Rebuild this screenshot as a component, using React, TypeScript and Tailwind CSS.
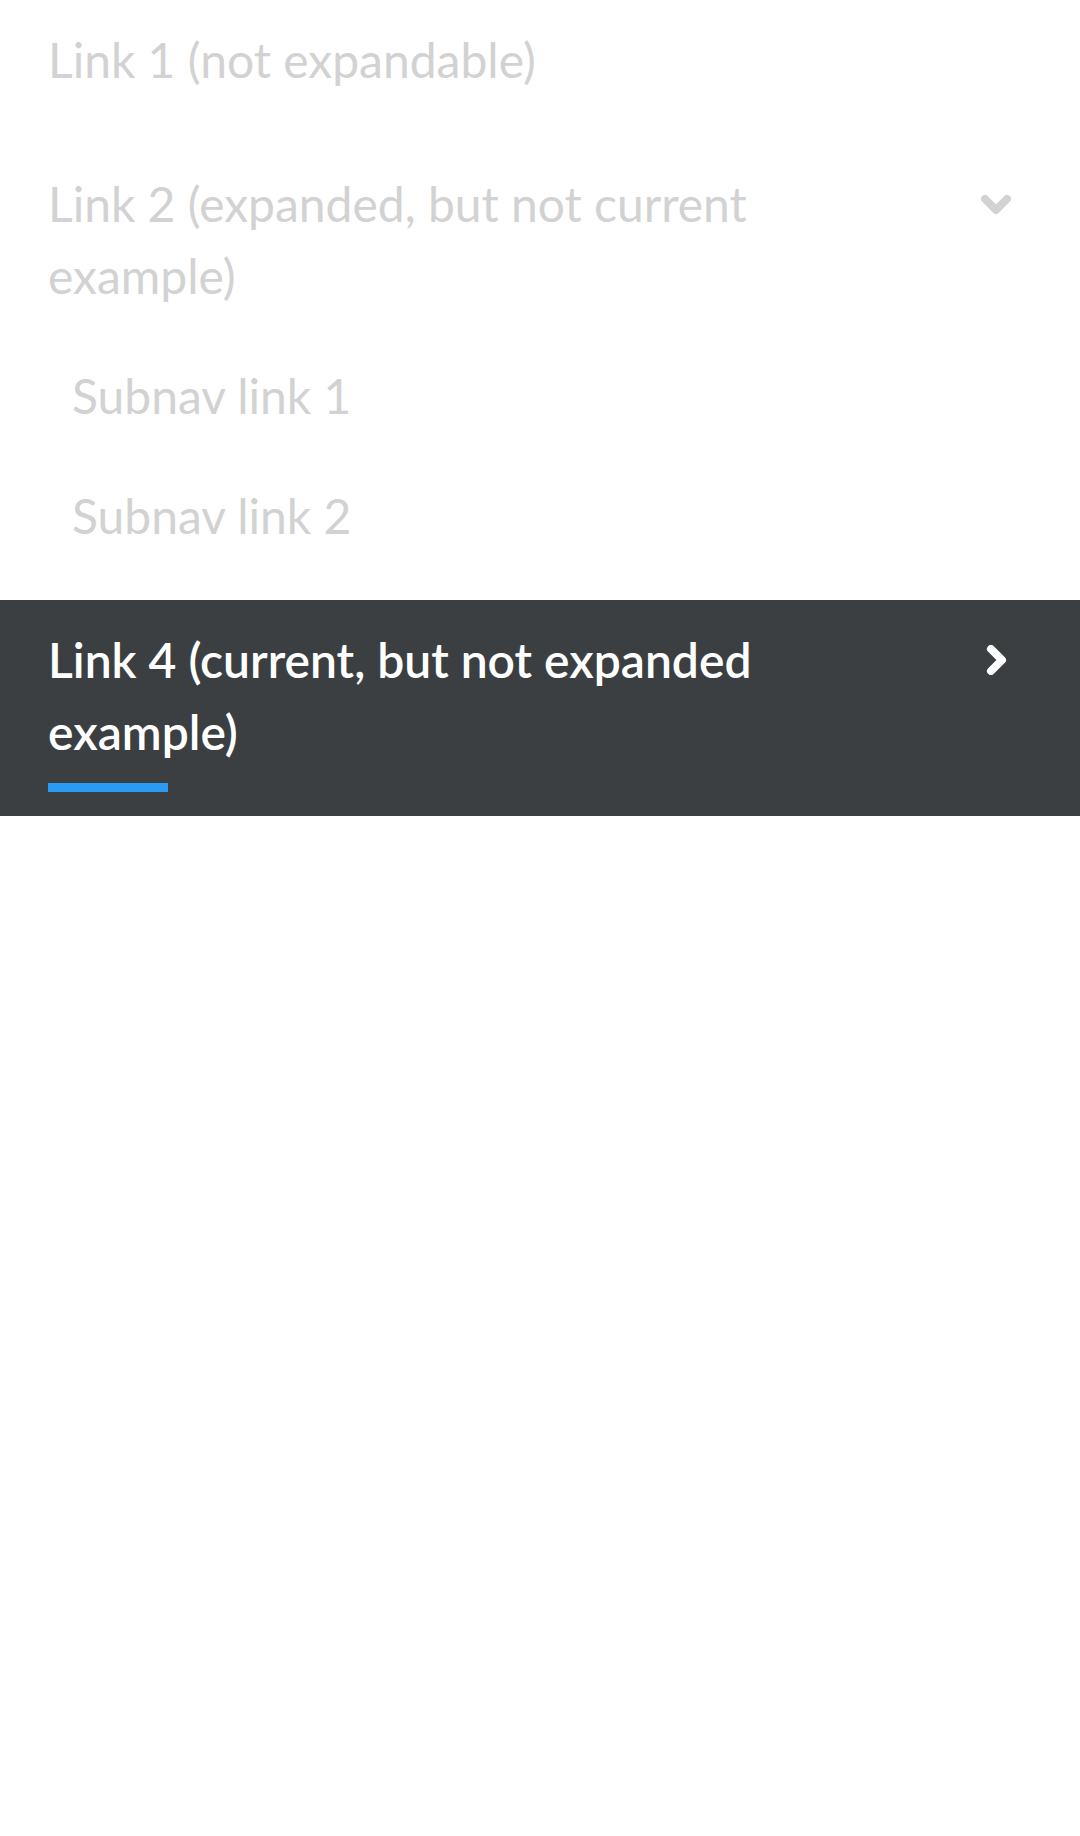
import React from "react";

interface NavItem {
  id: string;
  label: string;
  toggle?: "down" | "right";
  current?: boolean;
  children?: string[];
}

const items: NavItem[] = [
  { id: "1", label: "Link 1 (not expandable)" },
  {
    id: "2",
    label: "Link 2 (expanded, but not current example)",
    toggle: "down",
    children: ["Subnav link 1", "Subnav link 2"],
  },
  {
    id: "4",
    label: "Link 4 (current, but not expanded example)",
    toggle: "right",
    current: true,
  },
];

function Chevron({ dir, color }: { dir: "down" | "right"; color: string }) {
  return (
    <svg width="30" height="30" viewBox="0 0 30 30" fill="none" className="block">
      {dir === "down" ? (
        <path
          d="M4 10 L15 21 L26 10"
          stroke={color}
          strokeWidth="8"
          strokeLinecap="round"
          strokeLinejoin="round"
        />
      ) : (
        <path
          d="M10 4 L21 15 L10 26"
          stroke={color}
          strokeWidth="8"
          strokeLinecap="round"
          strokeLinejoin="round"
        />
      )}
    </svg>
  );
}

export default function App() {
  return (
    <div
      className="w-[1080px] min-h-[1836px] bg-white"
      style={{ fontFamily: "Lato, 'Open Sans', sans-serif" }}
    >
      <nav className="flex flex-col">
        {items.map((item, i) => (
          <div key={item.id} className={i > 0 ? "mt-6" : ""}>
            <div
              className={`flex items-start py-6 pl-12 pr-[69px] ${item.current ? "bg-[#3c3f42]" : ""}`}
            >
              <div className="w-[790px]">
                <span
                  className={`block text-[48px] leading-[72px] ${item.current ? "text-white font-semibold" : "text-[#d2d2d2] font-normal"}`}
                >
                  {item.label}
                </span>
                {item.current && <div className="mt-[15px] h-[9px] w-[120px] bg-[#2b9af3]" />}
              </div>
              {item.toggle && (
                <div className="ml-auto mt-[21px]">
                  <Chevron dir={item.toggle} color={item.current ? "#ffffff" : "#d2d2d2"} />
                </div>
              )}
            </div>
            {item.children && (
              <div className="flex flex-col">
                {item.children.map((c) => (
                  <div key={c} className="py-6 pl-[72px]">
                    <span className="block text-[48px] leading-[72px] text-[#d2d2d2] font-normal">{c}</span>
                  </div>
                ))}
              </div>
            )}
          </div>
        ))}
      </nav>
    </div>
  );
}
